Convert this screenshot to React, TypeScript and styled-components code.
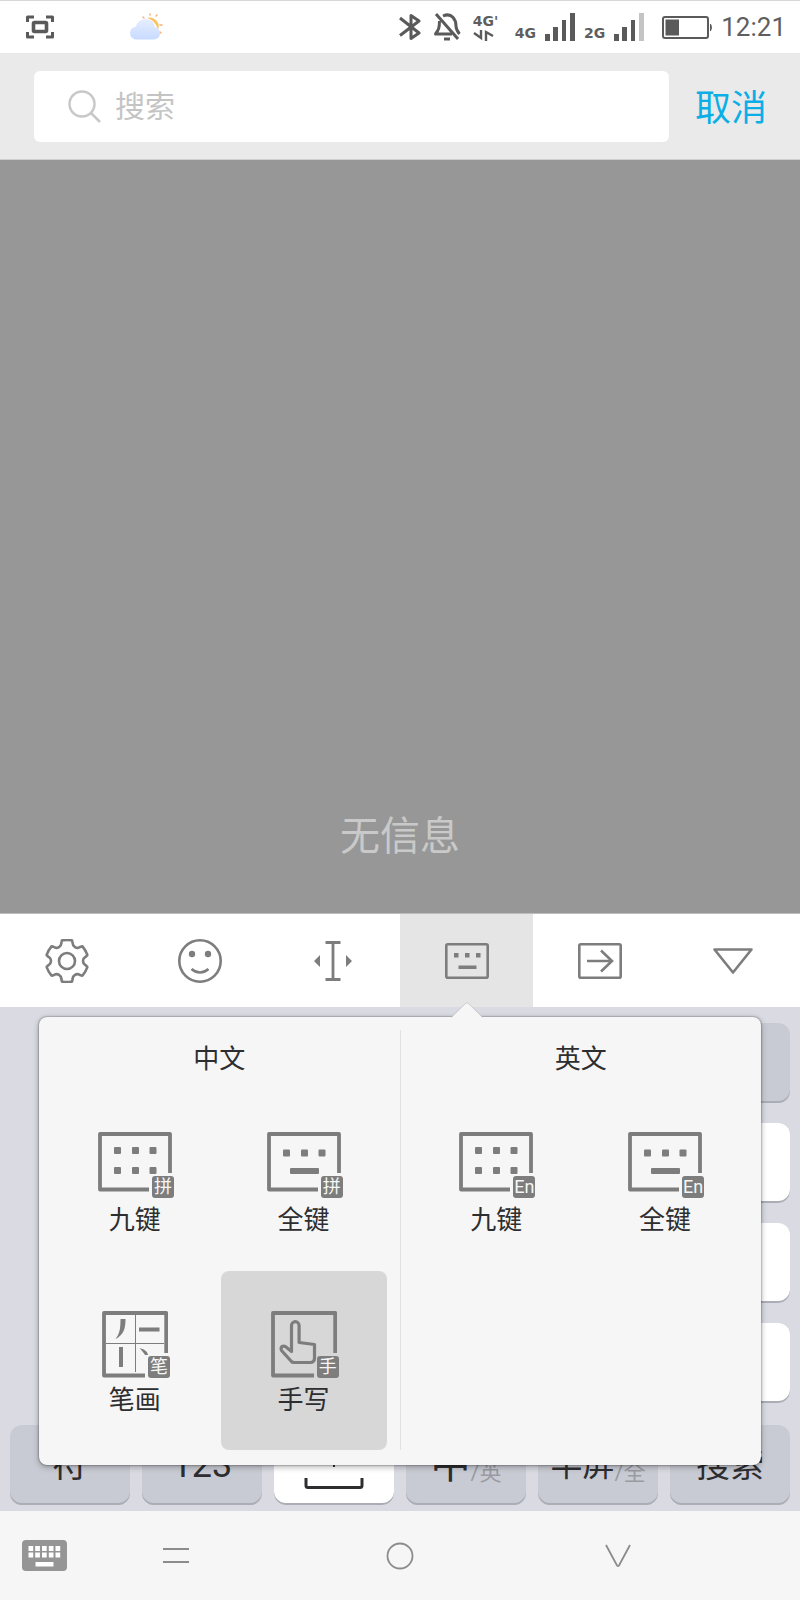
import React from "react";
import styled, { createGlobalStyle, css } from "styled-components";

const sans = `Roboto, "Noto Sans CJK SC", sans-serif`;
const ink = "#2e2e30";
const iconGray = "#7d7d7d";

const GlobalStyle = createGlobalStyle`
  *, *::before, *::after { box-sizing: border-box; }
  body { margin: 0; font-family: ${sans}; background: #979797; }
  button { border: 0; padding: 0; margin: 0; background: none; font: inherit; color: inherit; cursor: pointer; }
  svg { display: block; flex: none; }
`;

const Screen = styled.div`
  min-height: 100vh;
  display: flex;
  flex-direction: column;
`;

/* ---------- status bar ---------- */

const StatusBar = styled.header`
  height: 53px;
  display: flex;
  align-items: center;
  justify-content: space-between;
  padding: 0 14px 0 26px;
  background: #fff;
  border-top: 1px solid #d8d8d8;
  color: #5e5e5e;
`;

const StatusGroup = styled.div<{ $gap: number }>`
  display: flex;
  align-items: center;
  gap: ${(p) => p.$gap}px;
`;

const Network = styled.div`
  display: flex;
  align-items: flex-end;
  gap: 9px;
  height: 28px;
  padding-right: 6px;
`;

const NetworkLabel = styled.span`
  font: bold 14px/16px "DejaVu Sans", sans-serif;
`;

const DataState = styled.div`
  width: 30px;
  height: 28px;
  display: flex;
  flex-direction: column;
  justify-content: space-between;
`;

const Clock = styled.time`
  font-size: 26px;
  line-height: 32px;
`;

/* ---------- search header ---------- */

const SearchBar = styled.form`
  display: flex;
  align-items: center;
  gap: 26px;
  padding: 18px 33px 17px 34px;
  background: #eaeaea;
  border-bottom: 1px solid #d0d0d0;
`;

const SearchField = styled.label`
  flex: 1;
  min-width: 0;
  height: 71px;
  display: flex;
  align-items: center;
  gap: 14px;
  padding: 0 34px;
  background: #fff;
  border-radius: 6px;
`;

const SearchInput = styled.input`
  flex: 1;
  min-width: 0;
  border: 0;
  outline: 0;
  padding: 0;
  background: transparent;
  font: 30px/40px ${sans};
  color: ${ink};
  &::placeholder { color: #c4c4c4; opacity: 1; }
`;

const CancelButton = styled.button`
  padding-top: 4px;
  font-size: 36px;
  line-height: 48px;
  color: #0caee6;
`;

/* ---------- content ---------- */

const EmptyArea = styled.main`
  flex: 1;
  display: flex;
  align-items: flex-end;
  justify-content: center;
  padding: 48px 16px;
  background: #979797;
  border-bottom: 1px solid #bdbdbd;
`;

const EmptyText = styled.p`
  margin: 0;
  font-size: 40px;
  line-height: 56px;
  color: #c9c9c9;
`;

/* ---------- input method ---------- */

const Toolbar = styled.div`
  display: grid;
  grid-template-columns: repeat(6, 1fr);
  height: 93px;
  background: #fff;
`;

const ToolButton = styled.button<{ $active?: boolean }>`
  display: flex;
  align-items: center;
  justify-content: center;
  background: ${(p) => (p.$active ? "#e5e5e5" : "transparent")};
`;

const Keyboard = styled.section`
  position: relative;
  display: flex;
  flex-direction: column;
  gap: 20px;
  padding: 16px 10px 6px;
  background: #d9dae2;
`;

const KeyRow = styled.div`
  display: grid;
  grid-template-columns: repeat(6, 1fr);
  gap: 12px;
`;

const BottomRow = styled(KeyRow)`
  padding-top: 2px;
`;

const Key = styled.button<{ $light?: boolean; $last?: boolean; $size?: number }>`
  height: 80px;
  display: flex;
  align-items: center;
  justify-content: center;
  border-radius: 12px;
  background: ${(p) => (p.$light ? "#fff" : "#c9cbd4")};
  box-shadow: inset 0 -2px 0 #abadb6;
  font-size: ${(p) => p.$size ?? 36}px;
  line-height: 48px;
  white-space: nowrap;
  color: ${ink};
  ${(p) => p.$last && css`grid-column: 6;`}
`;

const KeyHint = styled.span`
  align-self: flex-end;
  font-size: 22px;
  line-height: 28px;
  padding-bottom: 18px;
  color: #9a9ba2;
`;

const Popover = styled.div`
  position: absolute;
  z-index: 1;
  top: 10px;
  left: 39px;
  right: 39px;
  display: grid;
  grid-template-columns: 1fr 1px 1fr;
  background: #f6f6f6;
  border-radius: 8px;
  box-shadow: 0 0 2px rgba(0, 0, 0, 0.6), 0 2px 6px rgba(0, 0, 0, 0.3);
`;

const PopoverArrow = styled.svg`
  position: absolute;
  top: -15px;
  left: calc(100% * 7 / 12 + 7px);
  transform: translateX(-50%);
`;

const Divider = styled.div`
  margin: 13px 0 15px;
  background: #e2e2e2;
`;

const LayoutGroup = styled.section`
  padding: 26px 13px 15px;
`;

const GroupTitle = styled.h2`
  margin: 0 0 17px;
  font-size: 26px;
  font-weight: 400;
  line-height: 32px;
  text-align: center;
  color: ${ink};
`;

const OptionGrid = styled.div`
  display: grid;
  grid-template-columns: 1fr 1fr;
  column-gap: 3px;
`;

const Option = styled.button<{ $selected?: boolean }>`
  height: 179px;
  display: flex;
  flex-direction: column;
  align-items: center;
  justify-content: flex-start;
  gap: 6px;
  padding-top: 40px;
  border-radius: 8px;
  background: ${(p) => (p.$selected ? "#d7d7d7" : "transparent")};
  font-size: 26px;
  line-height: 32px;
  color: ${ink};
`;

const OptionIcon = styled.span`
  position: relative;
`;

const Badge = styled.span`
  position: absolute;
  right: -2px;
  bottom: 0;
  width: 22px;
  height: 22px;
  border-radius: 3px;
  background: ${iconGray};
  color: #f6f6f6;
  font-size: 18px;
  line-height: 22px;
  text-align: center;
`;

/* ---------- navigation bar ---------- */

const NavBar = styled.nav`
  display: grid;
  grid-template-columns: 89fr 173fr 276fr 159fr 103fr;
  height: 89px;
  background: #f6f6f6;
`;

const NavButton = styled.button`
  display: flex;
  align-items: center;
  justify-content: center;
`;

/* ---------- icons ---------- */

const ScreenshotIcon = () => (
  <svg width="28" height="24" viewBox="0 0 28 24" fill="none" stroke="#5a5a5a">
    <path d="M1.500 7V2H8M20 2h6.500V7M26.500 17v5H20M8 22H1.500V17" strokeWidth="3" strokeLinejoin="round" />
    <rect x="7.500" y="7.500" width="13" height="9" rx="1" strokeWidth="3.600" />
  </svg>
);

const WeatherIcon = () => (
  <svg width="34" height="28" viewBox="0 0 34 28">
    <defs>
      <linearGradient id="cloud" x1="0" y1="0" x2="0" y2="1">
        <stop offset="0" stopColor="#e6eeff" />
        <stop offset="1" stopColor="#c8daff" />
      </linearGradient>
    </defs>
    <path d="M17 5a9 9 0 0 1 11 12c-2-7-5-10-11-12z" fill="#fbc25f" />
    <path d="M20 1v1M27 2l-1 1M13 4l1 1M32 12h-2M30 19l1 1" stroke="#f3b27a" strokeWidth="1.500" strokeLinecap="round" />
    <path d="M7 26.500a6.500 6.500 0 0 1-1-13C7 9 11 6 16 6c5 0 8 3 9 8 3 1 5 3 5 6.500 0 3.500-3 6-6.500 6z" fill="url(#cloud)" />
  </svg>
);

const BluetoothIcon = () => (
  <svg width="22" height="28" viewBox="0 0 22 28" fill="none" stroke="#5a5a5a" strokeWidth="3">
    <path d="M1 5l19 15-8 5.500V2.500L20 8 1 22.500" strokeLinejoin="round" />
  </svg>
);

const BellOffIcon = () => (
  <svg width="28" height="28" viewBox="0 0 28 28" fill="none" stroke="#5a5a5a" strokeWidth="3">
    <path d="M3 1l22 25" />
    <path d="M6.500 8c0 7-1 9-4 13H19" strokeLinejoin="round" />
    <path d="M10 3c9-4 13 4 13 10 0 3 1 5 3.500 8" />
    <path d="M11 26h6" />
  </svg>
);

const ArrowsIcon = () => (
  <svg width="22" height="12" viewBox="0 0 22 12" fill="none" stroke="#5a5a5a" strokeWidth="2.400">
    <path d="M1 4l7 5V1M13 12V3l7 4" />
  </svg>
);

const SignalIcon = ({ weak = false }: { weak?: boolean }) => (
  <svg width="30" height="28" viewBox="0 0 30 28" fill="#5a5a5a">
    <rect x="0" y="21" width="5" height="7" />
    <rect x="8" y="14" width="5" height="14" />
    <rect x="17" y="7" width="4" height="21" />
    <rect x="25" y="0" width="5" height="28" fill={weak ? "#c4c4c4" : undefined} />
  </svg>
);

const BatteryIcon = () => (
  <svg width="51" height="23" viewBox="0 0 51 23">
    <rect x="1" y="1" width="45" height="21" rx="2" fill="none" stroke="#5a5a5a" strokeWidth="2" />
    <rect x="3.500" y="3.500" width="13.500" height="16" fill="#5a5a5a" />
    <path d="M48.500 8q2 3.500 0 7z" fill="#5a5a5a" stroke="#5a5a5a" />
  </svg>
);

const SearchIcon = () => (
  <svg width="33" height="33" viewBox="0 0 33 33" fill="none" stroke="#c8c8c8" strokeWidth="2.500">
    <circle cx="14" cy="14" r="12.500" />
    <path d="M23 23l9 9" />
  </svg>
);

const polar = (radius: number, degrees: number) => {
  const a = ((degrees - 90) * Math.PI) / 180;
  return `${(22 + radius * Math.cos(a)).toFixed(1)} ${(22 + radius * Math.sin(a)).toFixed(1)}`;
};

/* Six rounded teeth with a concave notch between each pair. */
const gearPath =
  [0, 60, 120, 180, 240, 300]
    .map(
      (t, i) =>
        `${i ? "L" : "M"}${polar(20.5, t - 15)}Q${polar(21.5, t - 14)} ${polar(21.2, t - 11)}` +
        `Q${polar(21.5, t)} ${polar(21.2, t + 11)}Q${polar(21.5, t + 14)} ${polar(20.5, t + 15)}` +
        `L${polar(18.5, t + 18)}C${polar(15.5, t + 22)} ${polar(15.5, t + 38)} ${polar(18.5, t + 42)}`
    )
    .join("") + "Z";

const GearIcon = () => (
  <svg width="44" height="44" viewBox="0 0 44 44" fill="none" stroke={iconGray} strokeWidth="2.600" strokeLinejoin="round">
    <path d={gearPath} />
    <circle cx="22" cy="22" r="8" />
  </svg>
);

const SmileIcon = () => (
  <svg width="44" height="44" viewBox="0 0 44 44" fill="none" stroke={iconGray} strokeWidth="2.600">
    <circle cx="22" cy="22" r="20.700" />
    <circle cx="14" cy="15" r="3.200" fill={iconGray} stroke="none" />
    <circle cx="30" cy="15" r="3.200" fill={iconGray} stroke="none" />
    <path d="M13.500 30q8.500 7 17 0" />
  </svg>
);

const CursorIcon = () => (
  <svg width="40" height="40" viewBox="0 0 40 40" fill="none" stroke={iconGray} strokeWidth="2.800">
    <path d="M20 1.500v37M12.500 1.500h15M12.500 38.500h15" />
    <path d="M7 14v12L1 20zM33 14v12l6-6z" fill={iconGray} stroke="none" />
  </svg>
);

const KeyboardIcon = () => (
  <svg width="44" height="36" viewBox="0 0 44 36" fill={iconGray}>
    <rect x="1.300" y="1.300" width="41.400" height="33.400" rx="1.500" fill="none" stroke={iconGray} strokeWidth="2.600" />
    <path d="M9 10h4.500v4.500H9zM20 10h4.500v4.500H20zM31 10h4.500v4.500H31zM13.500 22.500h18v3.500h-18z" />
  </svg>
);

const ExportIcon = () => (
  <svg width="44" height="36" viewBox="0 0 44 36" fill="none" stroke={iconGray} strokeWidth="2.600">
    <rect x="1.300" y="1.300" width="41.400" height="33.400" rx="1.500" />
    <path d="M9 18h25M23 7.500L34 18 23 28.500" />
  </svg>
);

const CollapseIcon = () => (
  <svg width="40" height="26" viewBox="0 0 40 26" fill="none" stroke={iconGray} strokeWidth="2.600">
    <path d="M1.500 1.500h37L20 24.500z" strokeLinejoin="round" />
  </svg>
);

const WideFrame = ({ children }: { children: React.ReactNode }) => (
  <svg width="74" height="66" viewBox="0 0 74 66" fill={iconGray}>
    <path d="M72 41V2H2V57.500H51" fill="none" stroke={iconGray} strokeWidth="3.800" strokeLinejoin="round" />
    {children}
  </svg>
);

const NineKeyIcon = () => (
  <WideFrame>
    {[15, 35].map((y) =>
      [16, 34, 51.5].map((x) => <rect key={`${x}-${y}`} x={x} y={y} width="7" height="7" rx="1" />)
    )}
  </WideFrame>
);

const FullKeyIcon = () => (
  <WideFrame>
    {[16, 34, 51.5].map((x) => (
      <rect key={x} x={x} y="17.500" width="7" height="7" rx="1" />
    ))}
    <rect x="23" y="36" width="29" height="6" rx="1" />
  </WideFrame>
);

const SquareFrame = ({ children }: { children: React.ReactNode }) => (
  <svg width="66" height="67" viewBox="0 0 66 67" fill="none" stroke={iconGray}>
    <path d="M64.200 42V2H2V64.500H43" strokeWidth="3.800" strokeLinejoin="round" />
    {children}
  </svg>
);

const StrokeIcon = () => (
  <SquareFrame>
    <path d="M33.500 4v57M4 32.500h58" strokeWidth="1" />
    <path d="M37 18.500h20.500M19 36v20" strokeWidth="4" />
    <path d="M18.500 8h5c0 10-2 16-10 20 4-5 5-10 5-20zM37.500 37c4 1 8 3 8.500 7h-3c-1-2-3-4-5.500-7z" fill={iconGray} stroke="none" />
  </SquareFrame>
);

const HandIcon = () => (
  <SquareFrame>
    <path
      d="M20.500 40.500V14.500a3.800 3.800 0 0 1 7.600 0V31.500L43.500 33.500V47Q43.500 51.500 39 51.500H23Q21 51.500 20 50L10.500 39.500Q9.500 37 11 35.500Q13 34.500 15 36z"
      strokeWidth="3.200"
      strokeLinejoin="round"
    />
  </SquareFrame>
);

const SpaceIcon = () => (
  <svg width="60" height="60" viewBox="0 0 60 60" fill="none" stroke={ink}>
    <rect x="25" y="6" width="10" height="16" rx="5" strokeWidth="2" />
    <path d="M20 17a10 10 0 0 0 20 0M30 27v5" strokeWidth="2" />
    <path d="M2 43v7.500q0 2 2 2h52q2 0 2-2V43" strokeWidth="3" />
  </svg>
);

const NavKeyboardIcon = () => (
  <svg width="45" height="31" viewBox="0 0 45 31">
    <rect width="45" height="31" rx="4" fill="#959595" />
    {[6, 12.5].map((y) =>
      [6.5, 13.2, 20, 26.8, 33.5].map((x) => <rect key={`${x}-${y}`} x={x} y={y} width="4.700" height="5" fill="#fff" />)
    )}
    <rect x="13.500" y="22" width="18" height="4.500" fill="#fff" />
  </svg>
);

const MenuIcon = () => (
  <svg width="26" height="16" viewBox="0 0 26 16" stroke="#8c8c8c" strokeWidth="2">
    <path d="M0 1h26M0 14h26" />
  </svg>
);

const HomeIcon = () => (
  <svg width="28" height="28" viewBox="0 0 28 28" fill="none" stroke="#8c8c8c" strokeWidth="1.800">
    <circle cx="14" cy="14" r="12.500" />
  </svg>
);

const BackIcon = () => (
  <svg width="26" height="24" viewBox="0 0 26 24" fill="none" stroke="#8c8c8c" strokeWidth="1.800">
    <path d="M1 1l11 20.500q1 1.200 2 0L25 1" />
  </svg>
);

/* ---------- data ---------- */

const tools = [
  { name: "设置", icon: <GearIcon /> },
  { name: "表情", icon: <SmileIcon /> },
  { name: "光标", icon: <CursorIcon /> },
  { name: "键盘", icon: <KeyboardIcon />, active: true },
  { name: "导出", icon: <ExportIcon /> },
  { name: "收起", icon: <CollapseIcon /> },
];

const chinese = [
  { label: "九键", badge: "拼", icon: <NineKeyIcon /> },
  { label: "全键", badge: "拼", icon: <FullKeyIcon /> },
  { label: "笔画", badge: "笔", icon: <StrokeIcon /> },
  { label: "手写", badge: "手", icon: <HandIcon />, selected: true },
];

const english = [
  { label: "九键", badge: "En", icon: <NineKeyIcon /> },
  { label: "全键", badge: "En", icon: <FullKeyIcon /> },
];

type LayoutOption = { label: string; badge: string; icon: React.ReactNode; selected?: boolean };

const Layouts = ({ title, options }: { title: string; options: LayoutOption[] }) => (
  <LayoutGroup>
    <GroupTitle>{title}</GroupTitle>
    <OptionGrid>
      {options.map((o) => (
        <Option key={o.label} type="button" $selected={o.selected} aria-pressed={!!o.selected}>
          <OptionIcon>
            {o.icon}
            <Badge>{o.badge}</Badge>
          </OptionIcon>
          {o.label}
        </Option>
      ))}
    </OptionGrid>
  </LayoutGroup>
);

export default function App() {
  return (
    <Screen>
      <GlobalStyle />
      <StatusBar>
        <StatusGroup $gap={76}>
          <ScreenshotIcon />
          <WeatherIcon />
        </StatusGroup>
        <StatusGroup $gap={12}>
          <BluetoothIcon />
          <BellOffIcon />
          <DataState>
            <NetworkLabel>4G'</NetworkLabel>
            <ArrowsIcon />
          </DataState>
          <Network>
            <NetworkLabel>4G</NetworkLabel>
            <SignalIcon />
            <NetworkLabel>2G</NetworkLabel>
            <SignalIcon weak />
          </Network>
          <StatusGroup $gap={8}>
            <BatteryIcon />
            <Clock>12:21</Clock>
          </StatusGroup>
        </StatusGroup>
      </StatusBar>

      <SearchBar onSubmit={(e) => e.preventDefault()}>
        <SearchField>
          <SearchIcon />
          <SearchInput type="text" placeholder="搜索" aria-label="搜索" />
        </SearchField>
        <CancelButton type="button">取消</CancelButton>
      </SearchBar>

      <EmptyArea>
        <EmptyText>无信息</EmptyText>
      </EmptyArea>

      <Toolbar>
        {tools.map((t) => (
          <ToolButton key={t.name} type="button" aria-label={t.name} $active={t.active}>
            {t.icon}
          </ToolButton>
        ))}
      </Toolbar>

      <Keyboard>
        <KeyRow><Key type="button" aria-label="删除" $last /></KeyRow>
        <KeyRow><Key type="button" aria-label="逗号" $light $last /></KeyRow>
        <KeyRow><Key type="button" aria-label="句号" $light $last /></KeyRow>
        <KeyRow><Key type="button" aria-label="问号" $light $last /></KeyRow>
        <BottomRow>
          <Key type="button">符</Key>
          <Key type="button">123</Key>
          <Key type="button" aria-label="空格" $light><SpaceIcon /></Key>
          <Key type="button" $size={40}>中<KeyHint>/英</KeyHint></Key>
          <Key type="button" $size={32}>半屏<KeyHint>/全</KeyHint></Key>
          <Key type="button" $size={34}>搜索</Key>
        </BottomRow>
        <Popover>
          <PopoverArrow width="32" height="16" viewBox="0 0 32 16">
            <path d="M0 16L14.500 1.500q1.500-1.500 3 0L32 16z" fill="#f6f6f6" />
            <path d="M0 15.500L14.500 1.500q1.500-1.500 3 0L32 15.500" fill="none" stroke="#c4c4c6" strokeWidth="0.800" />
          </PopoverArrow>
          <Layouts title="中文" options={chinese} />
          <Divider />
          <Layouts title="英文" options={english} />
        </Popover>
      </Keyboard>

      <NavBar>
        <NavButton type="button" aria-label="切换输入法"><NavKeyboardIcon /></NavButton>
        <NavButton type="button" aria-label="最近任务"><MenuIcon /></NavButton>
        <NavButton type="button" aria-label="主屏幕"><HomeIcon /></NavButton>
        <NavButton type="button" aria-label="返回"><BackIcon /></NavButton>
      </NavBar>
    </Screen>
  );
}
